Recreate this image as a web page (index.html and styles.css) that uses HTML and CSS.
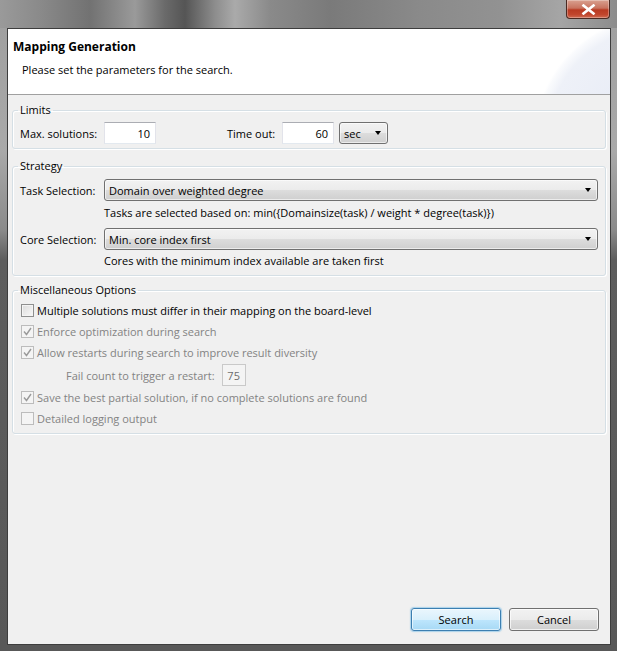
FILE: index.html
```html
<!DOCTYPE html>
<html>
<head>
<meta charset="utf-8">
<link rel="stylesheet" href="styles.css">
</head>
<body>
<div class="window">
  <div class="titlebar">
    <div class="close">
      <svg width="15" height="11" viewBox="0 0 15 11"><path d="M2.5 1.5 L12.5 9.5 M12.5 1.5 L2.5 9.5" stroke="#fff" stroke-width="2.6" stroke-linecap="square"/></svg>
    </div>
  </div>
  <div class="client">
    <div class="header">
      <div class="h-title">Mapping Generation</div>
      <div class="h-sub">Please set the parameters for the search.</div>
    </div>
    <div class="body">
      <fieldset class="group limits">
        <legend>Limits</legend>
        <div class="row">
          <span class="lbl col1">Max. solutions:</span>
          <span class="text w52">10</span>
          <span class="lbl col2">Time out:</span>
          <span class="text w52">60</span>
          <span class="combo unit">sec<i class="arrow"></i></span>
        </div>
      </fieldset>
      <fieldset class="group strategy">
        <legend>Strategy</legend>
        <div class="row">
          <span class="lbl col1">Task Selection:</span>
          <span class="combo wide">Domain over weighted degree<i class="arrow"></i></span>
        </div>
        <div class="desc d1">Tasks are selected based on: min({Domainsize(task) / weight * degree(task)})</div>
        <div class="row r2">
          <span class="lbl col1">Core Selection:</span>
          <span class="combo wide">Min. core index first<i class="arrow"></i></span>
        </div>
        <div class="desc d2">Cores with the minimum index available are taken first</div>
      </fieldset>
      <fieldset class="group misc">
        <legend>Miscellaneous Options</legend>
        <div class="check"><span class="box"></span><span>Multiple solutions must differ in their mapping on the board-level</span></div>
        <div class="check disabled"><span class="box checked"><svg width="11" height="11" viewBox="0 0 11 11"><path d="M2 5.5 L4.5 8.5 L9 2" fill="none" stroke="#9a9a9a" stroke-width="1.4"/></svg></span><span>Enforce optimization during search</span></div>
        <div class="check disabled"><span class="box checked"><svg width="11" height="11" viewBox="0 0 11 11"><path d="M2 5.5 L4.5 8.5 L9 2" fill="none" stroke="#9a9a9a" stroke-width="1.4"/></svg></span><span>Allow restarts during search to improve result diversity</span></div>
        <div class="failrow disabled"><span>Fail count to trigger a restart:</span><span class="text small">75</span></div>
        <div class="check disabled"><span class="box checked"><svg width="11" height="11" viewBox="0 0 11 11"><path d="M2 5.5 L4.5 8.5 L9 2" fill="none" stroke="#9a9a9a" stroke-width="1.4"/></svg></span><span>Save the best partial solution, if no complete solutions are found</span></div>
        <div class="check disabled"><span class="box"></span><span>Detailed logging output</span></div>
      </fieldset>
    </div>
    <div class="buttons">
      <span class="btn default">Search</span>
      <span class="btn">Cancel</span>
    </div>
  </div>
</div>
</body>
</html>
```
FILE: styles.css
```css
html, body { margin: 0; padding: 0; }
body {
  font-family: "Open Sans", "Noto Sans", sans-serif;
  font-size: 11px;
  color: #000;
}
.window {
  width: 617px;
  height: 651px;
  display: flex;
  flex-direction: column;
  background: linear-gradient(to bottom, #9e9e9e 0, #a9a9a9 150px, #8a8a8a 230px, #5d5d5d 260px, #585858 100%);
  box-sizing: border-box;
}
.titlebar {
  height: 28px;
  flex: none;
  display: flex;
  justify-content: flex-end;
  padding-right: 7px;
  background: linear-gradient(to right, #9a9a9a 0, #8a8a8a 40px, #727272 90px, #9a9a9a 135px, #6a6a6a 165px, #555 185px, #8d8d8d 215px, #aaa 235px, #8a8a8a 270px, #7a7a7a 330px, #8a8a8a 420px, #929292 500px, #a5a5a5 560px, #8c8c8c 617px);
}
.close {
  width: 44px;
  height: 19px;
  box-sizing: border-box;
  border: 1px solid #4a2a22;
  border-top: none;
  border-radius: 0 0 4px 4px;
  background: linear-gradient(to bottom, #d9a190 0, #c8735f 45%, #b93a22 55%, #c1452c 80%, #cf6a50 100%);
  box-shadow: inset 0 0 0 1px rgba(255,255,255,0.3);
  display: flex;
  align-items: center;
  justify-content: center;
}
.client {
  flex: 1;
  margin: 0 6px 6px 7px;
  border: 1px solid #3d3d3d;
  background: #f0f0f0;
  display: flex;
  flex-direction: column;
}
.header {
  height: 66px;
  flex: none;
  box-sizing: border-box;
  border-bottom: 1px solid #a0a0a0;
  background: radial-gradient(circle 126px at 652px 112px, #e4e8f4 0, #eef1f8 90%, #fafbfd 98%, #fff 100%), #fff;
  padding: 9px 0 0 5px;
}
.h-title {
  font-weight: bold;
  font-size: 12px;
  line-height: 18px;
}
.h-sub {
  margin: 6px 0 0 9px;
  line-height: 16px;
}
.body {
  flex: 1;
  padding: 7px 4px 0 4px;
  display: flex;
  flex-direction: column;
}
.group {
  margin: 0;
  padding: 0 7px 0 7px;
  border: 1px solid #d5dfe5;
  border-radius: 3px;
  box-shadow: inset 1px 1px 0 #fff, 1px 1px 0 #fff;
}
.group legend {
  padding: 0 2px;
  margin-left: -2px;
  line-height: 16px;
}
.limits { padding-top: 4px; padding-bottom: 4px; }
.strategy { padding-top: 5px; padding-bottom: 6px; margin-top: 9px; }
.misc { padding-top: 2px; padding-bottom: 4px; margin-top: 6px; }
.row {
  display: flex;
  align-items: center;
  height: 22px;
}
.lbl { flex: none; }
.col1 { width: 84px; }
.col2 { width: 55px; margin-left: 71px; }
.text {
  box-sizing: border-box;
  height: 22px;
  background: #fff;
  border: 1px solid #e2e3ea;
  border-top-color: #abadb3;
  border-bottom-color: #e3e9ef;
  display: flex;
  align-items: center;
  justify-content: flex-end;
  padding-right: 5px;
}
.w52 { width: 52px; }
.combo {
  box-sizing: border-box;
  height: 22px;
  border: 1px solid #707070;
  border-radius: 3px;
  background: linear-gradient(to bottom, #f2f2f2 0, #ebebeb 50%, #dddddd 50%, #cfcfcf 100%);
  box-shadow: inset 0 0 0 1px rgba(255,255,255,0.6);
  display: flex;
  align-items: center;
  padding-left: 4px;
}
.combo .arrow {
  margin-left: auto;
  margin-right: 6px;
  width: 0;
  height: 0;
  border-left: 3.5px solid transparent;
  border-right: 3.5px solid transparent;
  border-top: 4px solid #000;
}
.unit { width: 49px; margin-left: 5px; height: 22px; }
.wide { flex: 1; }
.desc {
  line-height: 16px;
  padding-left: 84px;
}
.d1 { margin-top: 4px; }
.r2 { margin-top: 7px; }
.d2 { margin-top: 3px; }
.check {
  display: flex;
  align-items: center;
  height: 21px;
  padding-left: 1px;
  gap: 3px;
}
.box {
  box-sizing: border-box;
  width: 13px;
  height: 13px;
  border: 1px solid #8e8f8f;
  background: linear-gradient(135deg, #dcdcdc 0, #f8f8f8 100%);
  box-shadow: inset 0 0 0 1px #f4f4f4;
  display: flex;
  align-items: center;
  justify-content: center;
}
.disabled { color: #838383; }
.disabled .box {
  border-color: #bcbcbc;
  background: #f4f4f4;
  box-shadow: none;
}
.failrow {
  display: flex;
  align-items: center;
  height: 22px;
  margin: 1px 0 1px 46px;
  gap: 7px;
}
.text.small {
  width: 24px;
  justify-content: center;
  padding: 0;
  border: 1px solid #c9c9c9;
  background: #f4f4f4;
  color: #6d6d6d;
}
.buttons {
  display: flex;
  justify-content: flex-end;
  gap: 8px;
  padding: 0 11px 13px 0;
}
.btn {
  box-sizing: border-box;
  width: 90px;
  height: 23px;
  border: 1px solid #707070;
  border-radius: 3px;
  background: linear-gradient(to bottom, #f2f2f2 0, #ebebeb 50%, #dddddd 50%, #cfcfcf 100%);
  box-shadow: inset 0 0 0 1px rgba(255,255,255,0.7);
  display: flex;
  align-items: center;
  justify-content: center;
}
.btn.default {
  border-color: #3c7fb1;
  background: linear-gradient(to bottom, #eaf6fd 0, #d9f0fc 50%, #bee6fd 50%, #a7d9f5 100%);
  box-shadow: inset 0 0 0 1px rgba(255,255,255,0.6), 0 0 1px 1px rgba(100,180,230,0.5);
}
```
